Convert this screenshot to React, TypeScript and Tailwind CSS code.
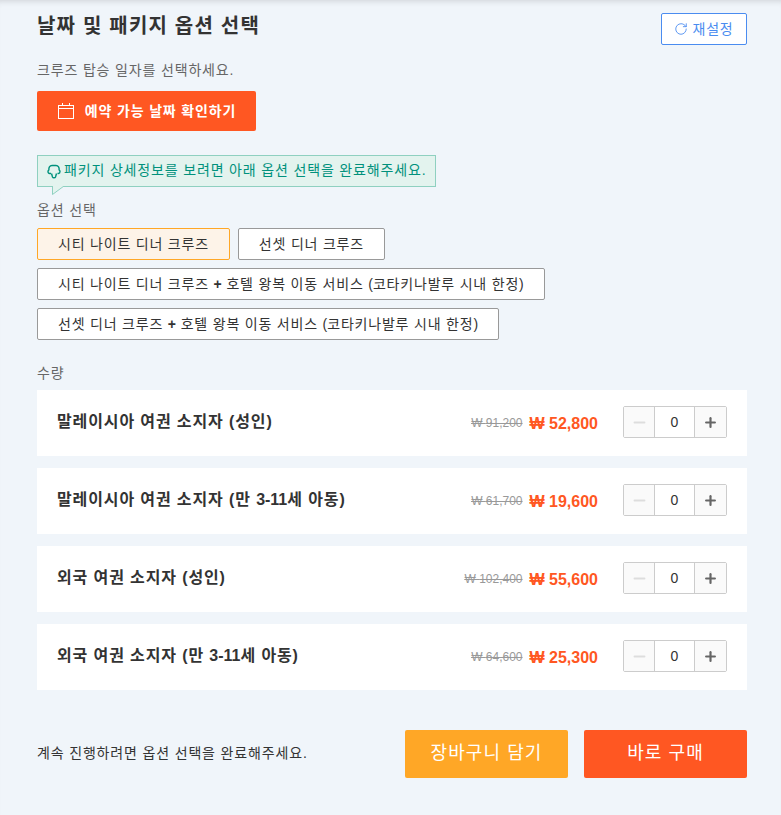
import { Minus, Plus, RotateCw } from "lucide-react";

const fontStack = "font-['Liberation_Sans','Noto_Sans_CJK_KR',sans-serif]";

const packages = [
  { name: "시티 나이트 디너 크루즈", active: true },
  { name: "선셋 디너 크루즈", active: false },
  { name: "시티 나이트 디너 크루즈 + 호텔 왕복 이동 서비스 (코타키나발루 시내 한정)", active: false },
  { name: "선셋 디너 크루즈 + 호텔 왕복 이동 서비스 (코타키나발루 시내 한정)", active: false },
];

const tickets = [
  { name: "말레이시아 여권 소지자 (성인)", original: "91,200", price: "52,800" },
  { name: "말레이시아 여권 소지자 (만 3-11세 아동)", original: "61,700", price: "19,600" },
  { name: "외국 여권 소지자 (성인)", original: "102,400", price: "55,600" },
  { name: "외국 여권 소지자 (만 3-11세 아동)", original: "64,600", price: "25,300" },
];

// latin bits of the package names are not spaced out like the hangul, and + is bold
const PackageName = ({ text }: { text: string }) => (
  <>
    {text.split(/([+()])/).map((part, i) =>
      part === "+" ? (
        <span key={i} className="font-bold tracking-normal">+</span>
      ) : part === "(" || part === ")" ? (
        <span key={i} className="tracking-normal">{part}</span>
      ) : (
        part
      )
    )}
  </>
);

const TicketName = ({ text }: { text: string }) => (
  <span className="-mt-[2px] text-[16px] font-bold tracking-[0.055em] text-[#333]">
    {text.split(/(3-11)/).map((part, i) =>
      part === "3-11" ? <span key={i} className="tracking-normal">{part}</span> : part
    )}
  </span>
);

const App = () => {
  return (
    <div className={`min-h-[815px] bg-[#f0f5fa] ${fontStack} text-[#333] shadow-[inset_0_6px_6px_-5px_rgba(0,0,0,0.15)]`}>
      <div className="pl-[37px] pr-[34px] pt-[13px] pb-[37px]">
        <div className="flex items-start justify-between">
          <h2 className="text-[20px] leading-[26px] font-bold tracking-[0.06em]">날짜 및 패키지 옵션 선택</h2>
          <button className="flex h-[32px] w-[86px] items-center justify-center gap-[4px] rounded-[2px] border border-[#4a8cf0] bg-white text-[14px] tracking-[0.06em] text-[#4a8cf0]">
            <RotateCw size={14} strokeWidth={1.5} />
            재설정
          </button>
        </div>

        <p className="mt-[15px] text-[14px] leading-[20px] tracking-[0.06em] text-[#666]">크루즈 탑승 일자를 선택하세요.</p>

        <button className="mt-[11px] flex h-[40px] w-[219px] items-center justify-center gap-[10px] rounded-[2px] bg-[#ff5722] text-[14px] font-bold tracking-[0.06em] text-white">
          <svg width="18" height="16" viewBox="0 0 18 16" fill="none" stroke="currentColor" strokeWidth="1">
            <rect x="1.5" y="2.5" width="15" height="13" />
            <path d="M1.5 5.5h15M5.5 0v3M12.5 0v3" />
          </svg>
          예약 가능 날짜 확인하기
        </button>

        <div className="relative mt-[24px] flex h-[32px] w-[399px] items-center gap-[3px] border border-[#8fd0c0] bg-[#e3f3ee] pl-[9px] text-[14px] tracking-[0.06em] text-[#00917c]">
          <svg width="14" height="16" viewBox="0 0 14 16" fill="none" stroke="currentColor" strokeWidth="1.4" strokeLinejoin="round">
            <path d="M4 10.5H2.6C1.5 10.5 1 9.6 1 8.6 1 7.6 1.4 7.2 1.9 6.9 1.6 4.6 2.6 2.5 5 2.5h4c2.4 0 3.4 2.1 3.1 4.4.5.3.9.7.9 1.7s-.5 1.9-1.6 1.9H10.5" />
            <path d="M4.5 10.5 5.5 14c.2.6.6.8 1.5.8s1.3-.2 1.5-.8l1-3.5" />
          </svg>
          <span className="-mt-[2px]">패키지 상세정보를 보려면 아래 옵션 선택을 완료해주세요.</span>
          <svg className="absolute left-[14px] top-[30px]" width="14" height="9" viewBox="0 0 14 9">
            <path d="M0.5 0V8.5L12 0" fill="#e3f3ee" stroke="#8fd0c0" />
          </svg>
        </div>

        <p className="mt-[13px] text-[14px] leading-[20px] tracking-[0.06em] text-[#666]">옵션 선택</p>

        <div className="mt-[8px] flex flex-wrap gap-x-[8px] gap-y-[8px]">
          {packages.map((item) => (
            <button
              key={item.name}
              className={
                item.active
                  ? "h-[32px] rounded-[2px] border border-[#ffa726] bg-[#fdf3e8] px-[20px] text-[14px] tracking-[0.057em] text-[#333]"
                  : "h-[32px] rounded-[2px] border border-[#999] bg-white px-[20px] text-[14px] tracking-[0.057em] text-[#333]"
              }
            >
              <PackageName text={item.name} />
            </button>
          ))}
        </div>

        <p className="mt-[23px] text-[14px] leading-[20px] tracking-[0.06em] text-[#666]">수량</p>

        <div className="mt-[7px] flex flex-col gap-[12px]">
          {tickets.map((ticket) => (
            <div key={ticket.name} className="flex h-[66px] items-center justify-between bg-white pl-[20px] pr-[20px]">
              <TicketName text={ticket.name} />
              <div className="flex items-center">
                <span className="mr-[7px] text-[12px] text-[#999] line-through">₩ {ticket.original}</span>
                <span className="mr-[25px] mt-[2px] text-[16px] font-bold text-[#ff5722]">₩ {ticket.price}</span>
                <div className="-mt-[2px] flex h-[32px] w-[104px] rounded-[2px] border border-[#ccc] bg-white">
                  <div className="flex w-[30px] items-center justify-center bg-[#fafafa] text-[#ddd]">
                    <Minus size={17} strokeWidth={2.8} />
                  </div>
                  <div className="flex flex-1 items-center justify-center border-x border-[#ccc] text-[14px] text-[#333]">0</div>
                  <div className="flex w-[31px] items-center justify-center bg-[#fafafa] text-[#666]">
                    <Plus size={15} strokeWidth={3.5} />
                  </div>
                </div>
              </div>
            </div>
          ))}
        </div>

        <div className="mt-[40px] flex items-center justify-between">
          <p className="-mt-[2px] text-[14px] tracking-[0.06em] text-[#333]">계속 진행하려면 옵션 선택을 완료해주세요.</p>
          <div className="flex gap-[16px]">
            <button className="h-[48px] w-[163px] rounded-[2px] bg-[#ffa726] pb-[2px] text-[18px] tracking-[0.06em] text-white">장바구니 담기</button>
            <button className="h-[48px] w-[163px] rounded-[2px] bg-[#ff5722] pb-[2px] text-[18px] tracking-[0.06em] text-white">바로 구매</button>
          </div>
        </div>
      </div>
    </div>
  );
};

export default App;
